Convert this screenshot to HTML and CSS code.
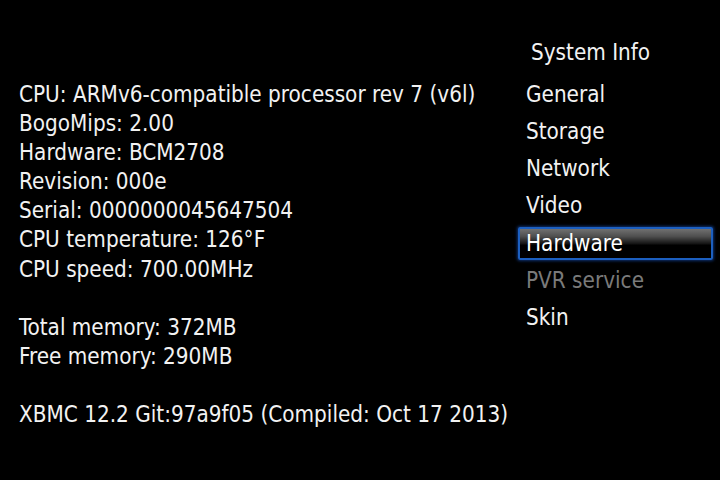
FILE: index.html
```html
<!DOCTYPE html>
<html>
<head>
<meta charset="utf-8">
<link rel="stylesheet" href="styles.css">
</head>
<body>
<div class="screen">
  <div class="info">
    <div class="line">CPU: ARMv6-compatible processor rev 7 (v6l)</div>
    <div class="line">BogoMips: 2.00</div>
    <div class="line">Hardware: BCM2708</div>
    <div class="line">Revision: 000e</div>
    <div class="line">Serial: 0000000045647504</div>
    <div class="line">CPU temperature: 126°F</div>
    <div class="line">CPU speed: 700.00MHz</div>
    <div class="line blank"></div>
    <div class="line">Total memory: 372MB</div>
    <div class="line">Free memory: 290MB</div>
    <div class="line blank"></div>
    <div class="line">XBMC 12.2 Git:97a9f05 (Compiled: Oct 17 2013)</div>
  </div>
  <div class="side">
    <div class="title">System Info</div>
    <ul class="menu">
      <li class="item">General</li>
      <li class="item">Storage</li>
      <li class="item">Network</li>
      <li class="item">Video</li>
      <li class="item active">Hardware</li>
      <li class="item disabled">PVR service</li>
      <li class="item">Skin</li>
    </ul>
  </div>
</div>
</body>
</html>
```
FILE: styles.css
```css
html, body {
  margin: 0;
  padding: 0;
  background: #000;
}
.screen {
  width: 720px;
  height: 480px;
  display: flex;
  font-family: "DejaVu Sans Condensed", "DejaVu Sans", sans-serif;
  font-stretch: condensed;
  font-size: 22.3px;
  color: #f2f2f2;
  overflow: hidden;
}
.info {
  flex: 1;
  padding: 80px 0 0 19px;
}
.line {
  height: 29.1px;
  line-height: 29.1px;
  white-space: nowrap;
}
.side {
  width: 195px;
  margin-right: 7px;
  padding-top: 38px;
}
.title {
  height: 29px;
  line-height: 29px;
  padding-left: 13px;
  margin-bottom: 8px;
}
.menu {
  list-style: none;
  margin: 0;
  padding: 3px 0 0;
  display: flex;
  flex-direction: column;
  gap: 4.17px;
}
.item {
  height: 29px;
  line-height: 29px;
  border: 2px solid transparent;
  padding-left: 6px;
  border-radius: 2px;
}
.item.active {
  border-color: #1c5fc0;
  box-shadow: 0 0 3px 1px rgba(20, 70, 160, 0.7);
  background: linear-gradient(to bottom, #707070 0%, #505050 25%, #161616 50%, #000 56%, #000 100%);
  color: #fff;
}
.item.disabled {
  color: #7a7a7a;
}
```
